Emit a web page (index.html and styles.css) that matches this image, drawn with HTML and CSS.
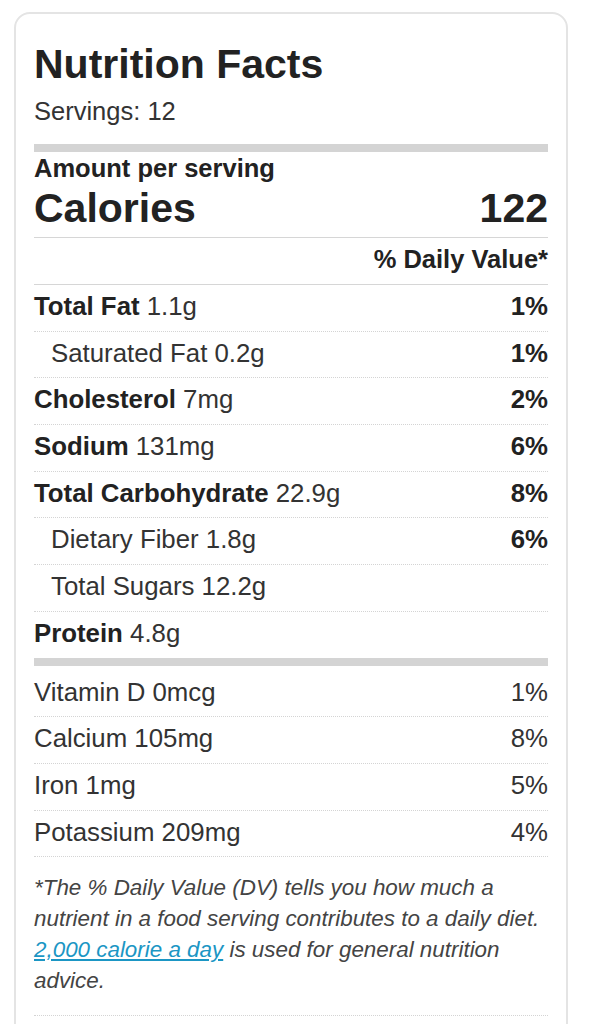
FILE: index.html
```html
<!DOCTYPE html>
<html lang="en">
<head>
<meta charset="utf-8">
<title>Nutrition Facts</title>
<link rel="stylesheet" href="styles.css">
</head>
<body>
<div class="card">
  <h2 class="title">Nutrition Facts</h2>
  <div class="servings">Servings: 12</div>
  <div class="bar"></div>
  <div class="amount">Amount per serving</div>
  <div class="calories"><span>Calories</span><span>122</span></div>
  <div class="dv">% Daily Value*</div>
  <div class="row"><span><b>Total Fat</b> 1.1g</span><b>1%</b></div>
  <div class="row sub"><span>Saturated Fat 0.2g</span><b>1%</b></div>
  <div class="row"><span><b>Cholesterol</b> 7mg</span><b>2%</b></div>
  <div class="row"><span><b>Sodium</b> 131mg</span><b>6%</b></div>
  <div class="row"><span><b>Total Carbohydrate</b> 22.9g</span><b>8%</b></div>
  <div class="row sub"><span>Dietary Fiber 1.8g</span><b>6%</b></div>
  <div class="row sub"><span>Total Sugars 12.2g</span></div>
  <div class="row last"><span><b>Protein</b> 4.8g</span></div>
  <div class="bar bar-after"></div>
  <div class="row"><span>Vitamin D 0mcg</span><span>1%</span></div>
  <div class="row"><span>Calcium 105mg</span><span>8%</span></div>
  <div class="row"><span>Iron 1mg</span><span>5%</span></div>
  <div class="row"><span>Potassium 209mg</span><span>4%</span></div>
  <p class="note">*The % Daily Value (DV) tells you how much a nutrient in a food serving contributes to a daily diet. <a href="#">2,000 calorie a day</a> is used for general nutrition advice.</p>
  <div class="end"></div>
</div>
</body>
</html>
```
FILE: styles.css
```css
html, body {
  margin: 0;
  padding: 0;
  background: #fff;
}
body {
  font-family: "Liberation Sans", Arial, Helvetica, sans-serif;
  color: #333;
}
.card {
  box-sizing: border-box;
  width: 554px;
  margin: 12px 0 0 14px;
  border: 2px solid #e4e4e4;
  border-radius: 16px;
  padding: 26px 18px 40px 18px;
}
.title {
  margin: 0 0 8px;
  font-size: 41px;
  line-height: 48px;
  font-weight: bold;
  color: #222;
}
.servings {
  font-size: 25.5px;
  line-height: 30px;
  color: #333;
}
.bar {
  height: 8px;
  background: #d4d4d4;
  margin-top: 18px;
}
.bar-after {
  margin-top: 0;
  margin-bottom: 5px;
}
.amount {
  font-size: 25.5px;
  line-height: 32px;
  font-weight: bold;
  color: #222;
}
.calories {
  display: flex;
  justify-content: space-between;
  font-size: 41px;
  line-height: 48px;
  font-weight: bold;
  color: #222;
  padding-bottom: 5px;
  border-bottom: 1px solid #d6d6d6;
}
.dv {
  text-align: right;
  font-size: 25.5px;
  line-height: 30px;
  font-weight: bold;
  color: #222;
  padding: 6px 0 10px;
  border-bottom: 1px solid #d6d6d6;
}
.row {
  display: flex;
  justify-content: space-between;
  font-size: 25.8px;
  line-height: 30px;
  padding: 6px 0 9.7px;
  border-bottom: 1px dotted #d4d4d4;
  color: #333;
}
.row b {
  color: #222;
}
.row.sub {
  padding-left: 17px;
}
.row.last {
  border-bottom: none;
}
.note {
  margin: 0;
  padding: 15px 0 19px;
  font-size: 22.4px;
  line-height: 31px;
  font-style: italic;
  color: #444;
  border-bottom: 1px dotted #d4d4d4;
}
.note a {
  color: #1b96c4;
  text-decoration: underline;
}
.end {
  height: 0;
}
```
